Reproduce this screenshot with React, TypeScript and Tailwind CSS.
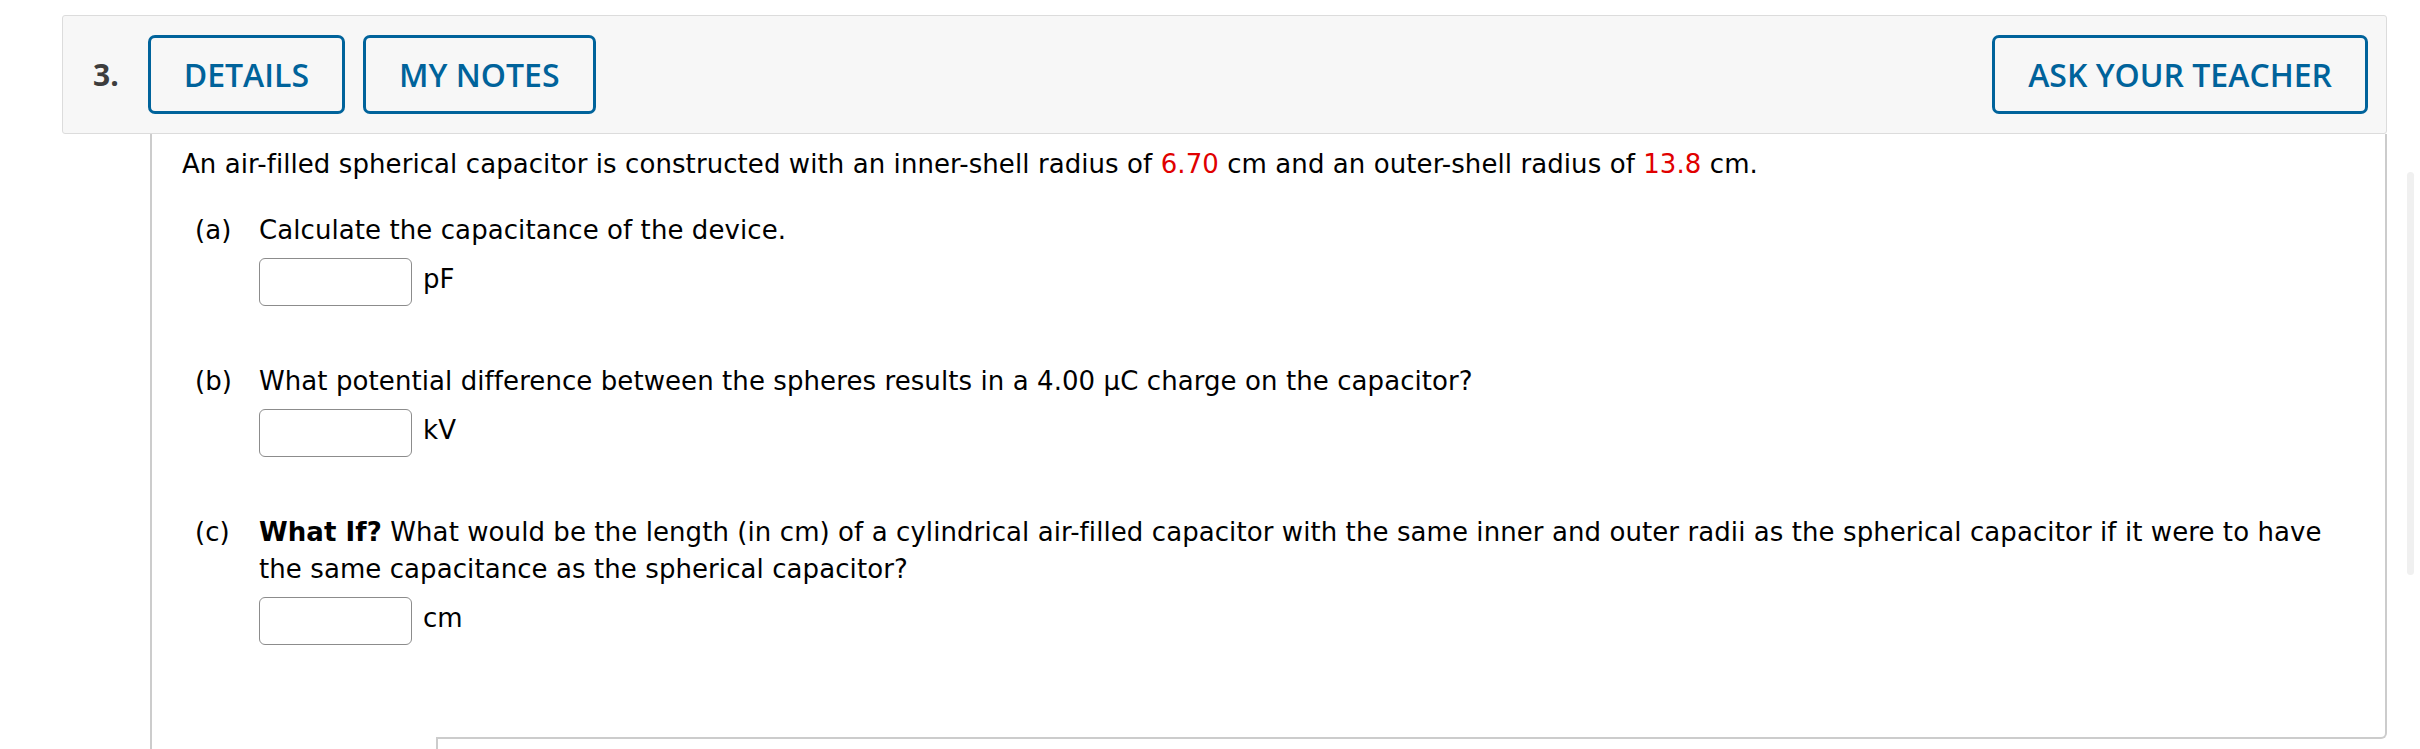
export default function App() {
  const btn =
    "h-[79px] shrink-0 rounded-[7px] border-[3px] border-[#00639b] bg-transparent px-[33px] font-['Open_Sans',sans-serif] text-[32px] font-semibold leading-none text-[#00639b]";
  return (
    <div className="relative h-[749px] overflow-hidden bg-white pl-[62px] pr-[33px] pt-[15px] font-['DejaVu_Sans',sans-serif] text-black">
      <div className="flex h-[119px] items-center rounded-[3px] border border-[#dcdcdc] bg-[#f7f7f7] pl-[30px] pr-[18px]">
        <span className="mr-[29px] font-['Open_Sans',sans-serif] text-[30px] font-bold text-[#3d3d3d]">3.</span>
        <div className="flex gap-[18px]">
          <button className={btn}>DETAILS</button>
          <button className={btn}>MY NOTES</button>
        </div>
        <button className={"ml-auto " + btn}>ASK YOUR TEACHER</button>
      </div>

      <div className="ml-[88px] flex h-[640px] flex-col border-l-2 border-[#cccccc]">
        <div className="flex h-[595px] shrink-0 flex-col border-r-2 border-[#cccccc] pl-[30px] pr-[40px] pt-[12px] text-[26px] leading-[37px] tracking-[0.08px]">
          <p>
            An air-filled spherical capacitor is constructed with an inner-shell radius of{" "}
            <span className="text-[#e00000]">6.70</span> cm and an outer-shell radius of{" "}
            <span className="text-[#e00000]">13.8</span> cm.
          </p>

          <div className="mt-[29px] flex flex-col gap-[57px] pl-[13px]">
            <Part label="(a)" unit="pF">
              Calculate the capacitance of the device.
            </Part>
            <Part label="(b)" unit="kV">
              What potential difference between the spheres results in a 4.00 μC charge on the capacitor?
            </Part>
            <Part label="(c)" unit="cm">
              <b>What If?</b> What would be the length (in cm) of a cylindrical air-filled capacitor with the same inner and outer radii as the spherical capacitor if it were to have the same capacitance as the spherical capacitor?
            </Part>
          </div>
        </div>
        <div className="flex h-[10px] shrink-0">
          <div className="w-[284px] shrink-0" />
          <div className="flex-1 rounded-br-[6px] border-b-2 border-r-2 border-[#cccccc]" />
        </div>
        <div className="ml-[284px] h-[20px] shrink-0 border-l-2 border-[#cccccc]" />
      </div>

      <div className="absolute right-[6px] top-[172px] h-[403px] w-[7px] rounded-full bg-[#f0f0f0]" />
    </div>
  );
}

function Part({ label, unit, children }: { label: string; unit: string; children: React.ReactNode }) {
  return (
    <div className="flex">
      <div className="w-[64px] shrink-0">{label}</div>
      <div className="flex flex-col gap-[9px]">
        <div>{children}</div>
        <div className="flex items-center gap-[11px]">
          <input className="h-[48px] w-[153px] rounded-[6px] border-[1.5px] border-[#8c8c8c] bg-white" />
          <span className="-mt-[6px]">{unit}</span>
        </div>
      </div>
    </div>
  );
}
